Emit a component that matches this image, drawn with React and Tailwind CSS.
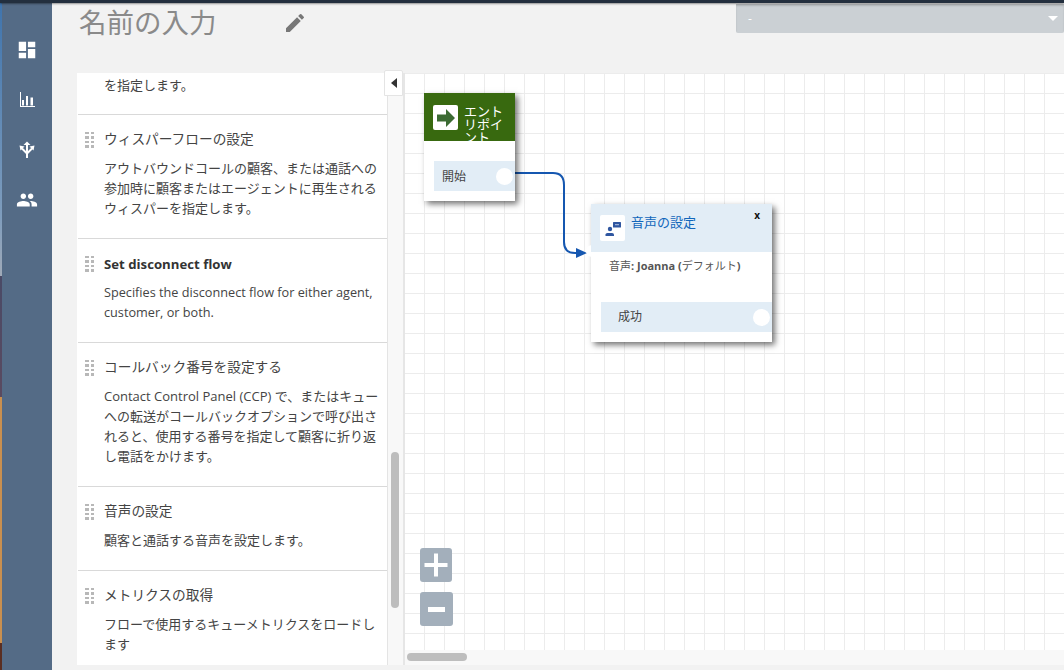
import { MdDashboard, MdEdit, MdGroup } from 'react-icons/md'

const items = [
  {
    title: 'ウィスパーフローの設定',
    lines: ['アウトバウンドコールの顧客、または通話への', '参加時に顧客またはエージェントに再生される', 'ウィスパーを指定します。'],
  },
  {
    title: 'Set disconnect flow',
    bold: true,
    lines: ['Specifies the disconnect flow for either agent,', 'customer, or both.'],
  },
  {
    title: 'コールバック番号を設定する',
    lines: ['Contact Control Panel (CCP) で、またはキュー', 'への転送がコールバックオプションで呼び出さ', 'れると、使用する番号を指定して顧客に折り返', 'し電話をかけます。'],
  },
  {
    title: '音声の設定',
    lines: ['顧客と通話する音声を設定します。'],
  },
  {
    title: 'メトリクスの取得',
    lines: ['フローで使用するキューメトリクスをロードし', 'ます'],
  },
]

function DragHandle() {
  return (
    <div className="grid grid-cols-2 gap-[2px] w-[9px] h-[16px] mt-[1px] shrink-0">
      {[0, 1, 2, 3, 4, 5, 6, 7].map((i) => (
        <span key={i} className="w-[3.5px] h-[2.5px] bg-[#b8b8b8]" />
      ))}
    </div>
  )
}

function BarsIcon() {
  return (
    <svg viewBox="0 0 15 15" className="w-[15px] h-[15px]" fill="#fff">
      <rect x="0" y="0" width="1" height="15" />
      <rect x="0" y="14" width="15" height="1" />
      <rect x="2" y="8" width="2" height="5.5" />
      <rect x="6" y="4" width="2" height="9.5" />
      <rect x="10.5" y="5.5" width="2.5" height="8" />
    </svg>
  )
}

function RoutingIcon() {
  return (
    <svg viewBox="0 0 18 20" className="w-[18px] h-[20px]" fill="none" stroke="#fff" strokeWidth="2">
      <path d="M9 18V4" />
      <path d="M9 13.5 L4 8.5 M9 13.5 L14 8.5" />
      <path d="M5.5 5 L9 1.5 L12.5 5 Z" fill="#fff" stroke="none" />
      <path d="M1.5 5.5 L6.5 6.5 L2.5 10.5 Z" fill="#fff" stroke="none" />
      <path d="M16.5 5.5 L11.5 6.5 L15.5 10.5 Z" fill="#fff" stroke="none" />
    </svg>
  )
}

export default function App() {
  return (
    <div className="w-[1064px] h-[670px] overflow-hidden flex flex-col bg-[#f2f2f2] font-['Open_Sans','Noto_Sans_CJK_JP',sans-serif] text-[#444]">
      <div className="h-[3px] bg-[#232f3e] shrink-0 shadow-[0_1px_2px_rgba(0,0,0,0.4)] relative z-10" />
      <div className="flex flex-1 min-h-0">
        <div className="w-[2px] bg-[linear-gradient(#3f74ad_0%,#7f9dbd_32%,#a0aab8_41%,#4a4a66_41%,#5a4a60_59%,#c98f4f_59%,#c98f4f_96%,#5a2e22_96%)] shrink-0" />
        <nav className="w-[50px] bg-[#546b86] shrink-0 flex flex-col items-center pt-[36px]">
          <MdDashboard className="text-white w-[22px] h-[22px]" />
          <div className="mt-[31px] h-[15px]"><BarsIcon /></div>
          <div className="mt-[33px] h-[20px]"><RoutingIcon /></div>
          <MdGroup className="text-white w-[22px] h-[22px] mt-[29px]" />
        </nav>

        <main className="flex-1 min-w-0 flex flex-col">
          <header className="h-[70px] shrink-0 flex items-start">
            <h1 className="ml-[27px] w-[206px] text-[27.5px] leading-[40px] font-normal text-[#8a8a8a] whitespace-nowrap">名前の入力</h1>
            <MdEdit className="text-[#777] w-[24px] h-[24px] mt-[8px] -ml-[2px]" />
            <div className="ml-[429px] mt-[1px] w-[328px] h-[29px] bg-[#cbd0d4] rounded-b-[2px] flex items-center justify-between pl-[12px] pr-[6px] shadow-[inset_0_2px_2px_rgba(0,0,0,0.12)]">
              <span className="text-white text-[12px] leading-none">-</span>
              <span className="w-0 h-0 border-x-[5px] border-x-transparent border-t-[5px] border-t-white" />
            </div>
          </header>

          <div className="flex-1 min-h-0 flex pb-[5px]">
            <aside className="ml-[25px] w-[311px] shrink-0 bg-white overflow-hidden text-[13px] leading-[20px] border-r border-[#e4e4e4]">
              <div className="ml-[1px] pl-[26px] pt-[2px] pb-[19px] border-b border-[#d9d9d9]">
                <p>を指定します。</p>
              </div>
              {items.map((item) => (
                <div key={item.title} className="ml-[1px] pt-[14px] pb-[20px] border-b border-[#d9d9d9] last:border-b-0">
                  <div className="flex items-center pl-[7px] h-[20px]">
                    <DragHandle />
                    <h3 className={`ml-[10px] whitespace-nowrap ${item.bold ? 'text-[13.2px] font-bold text-[#333] translate-y-[1px]' : 'text-[13.7px] font-normal text-[#444]'}`}>{item.title}</h3>
                  </div>
                  <div className={`mt-[9px] pl-[26px] ${item.bold ? 'text-[12.7px]' : ''}`}>
                    {item.lines.map((line) => (
                      <p key={line} className="whitespace-nowrap">{line}</p>
                    ))}
                  </div>
                </div>
              ))}
            </aside>

            <div className="relative w-[17px] shrink-0 bg-[#f8f8f8] pt-[379px] pl-[3px] border-r-2 border-[#e6e6e6]">
              <div className="absolute -left-[4px] -top-[3px] w-[19px] h-[26px] bg-white border border-[#e4e4e4] rounded-t-[2px] flex items-center justify-center">
                <span className="w-0 h-0 border-y-[5px] border-y-transparent border-r-[6px] border-r-[#333]" />
              </div>
              <div className="w-[8px] h-[156px] rounded-[4px] bg-[#bdbdbd]" />
            </div>

            <section className="relative flex-1 min-w-0 bg-white bg-[linear-gradient(#ececec_1px,transparent_1px),linear-gradient(90deg,#ececec_1px,transparent_1px)] bg-[size:20px_20px] bg-[position:19px_0]">
              <svg className="absolute left-0 top-0 w-[659px] h-[400px]" fill="none">
                <path d="M108 100 H148 Q159 100 159 112 V169 Q159 180 170 180 H174" stroke="#1557b0" strokeWidth="2" />
                <path d="M171 175 L182 180 L171 185 Z" fill="#1557b0" />
              </svg>

              <div className="absolute left-[19px] top-[20px] w-[91px] h-[108px] bg-white shadow-[3px_3px_6px_rgba(0,0,0,0.55)]">
                <div className="h-[48px] bg-[#38690f] overflow-hidden flex items-start pl-[9px] pt-[12px]">
                  <div className="w-[25px] h-[25px] bg-white rounded-[2px] flex items-center justify-center shrink-0">
                    <svg viewBox="0 0 20 20" className="w-[20px] h-[20px]">
                      <path d="M1 6.5 H10 V1 L19 10 L10 19 V13.5 H1 Z" fill="#3c6b33" />
                    </svg>
                  </div>
                  <p className="ml-[6px] w-[42px] text-white text-[13px] leading-[13px]">エントリポイント</p>
                </div>
                <div className="mt-[20px] ml-[10px] h-[30px] bg-[#e2edf6] flex items-center justify-between pl-[8px] pr-[2px] text-[12px]">
                  <span className="translate-y-[1px]">開始</span>
                  <span className="w-[17px] h-[17px] rounded-full bg-white" />
                </div>
              </div>

              <div className="absolute left-[186px] top-[131px] w-[181px] h-[138px] bg-white shadow-[3px_3px_6px_rgba(0,0,0,0.55)]">
                <span className="absolute -left-[5px] top-[41px] w-[12px] h-[12px] rounded-full bg-white" />
                <div className="relative h-[48px] bg-[#e2edf6] flex items-start pl-[9px] pt-[11px]">
                  <div className="w-[25px] h-[26px] bg-white rounded-[2px] shrink-0">
                    <svg viewBox="0 0 25 26" className="w-[25px] h-[26px]" fill="#2f56a0">
                      <circle cx="10" cy="14" r="2.2" />
                      <path d="M5.5 21 V19.5 Q5.5 18 7.5 18 H12 Q14 18 14 19.5 V21 Z" />
                      <rect x="13" y="7" width="8" height="5.5" rx="0.5" />
                      <rect x="15" y="9.2" width="4" height="1" fill="#b9c8e4" />
                    </svg>
                  </div>
                  <span className="ml-[6px] -mt-[1px] text-[13px] leading-[16px] text-[#1166bb]">音声の設定</span>
                  <span className="absolute right-[12px] top-[3px] text-[10px] font-bold leading-[16px] text-[#111]">x</span>
                </div>
                <p className="mt-[5px] ml-[18px] text-[11px] leading-[18px] text-[#555] whitespace-nowrap">音声<b>: Joanna (</b>デフォルト<b>)</b></p>
                <div className="mt-[27px] ml-[10px] h-[30px] bg-[#e2edf6] flex items-center justify-between pl-[17px] pr-[2px] text-[12px]">
                  <span>成功</span>
                  <span className="w-[17px] h-[17px] rounded-full bg-white" />
                </div>
              </div>

              <div className="absolute left-[15px] top-[475px] flex flex-col gap-[10px]">
                <button className="w-[32px] h-[34px] rounded-[3px] bg-[#a3afbb] flex items-center justify-center">
                  <svg viewBox="0 0 24 24" className="w-[24px] h-[24px]" fill="#fff"><path d="M10 0.5h4v9.5h9.5v4h-9.5v9.5h-4v-9.5h-9.5v-4h9.5z" /></svg>
                </button>
                <button className="w-[33px] h-[34px] rounded-[3px] bg-[#a3afbb] flex items-center justify-center">
                  <span className="w-[17px] h-[5px] bg-white" />
                </button>
              </div>

              <div className="absolute left-0 right-0 bottom-0 h-[15px] bg-[#f8f8f8] pl-[2px] pt-[3px]">
                <div className="w-[60px] h-[8px] rounded-[4px] bg-[#bdbdbd]" />
              </div>
            </section>
          </div>
        </main>
      </div>
    </div>
  )
}
